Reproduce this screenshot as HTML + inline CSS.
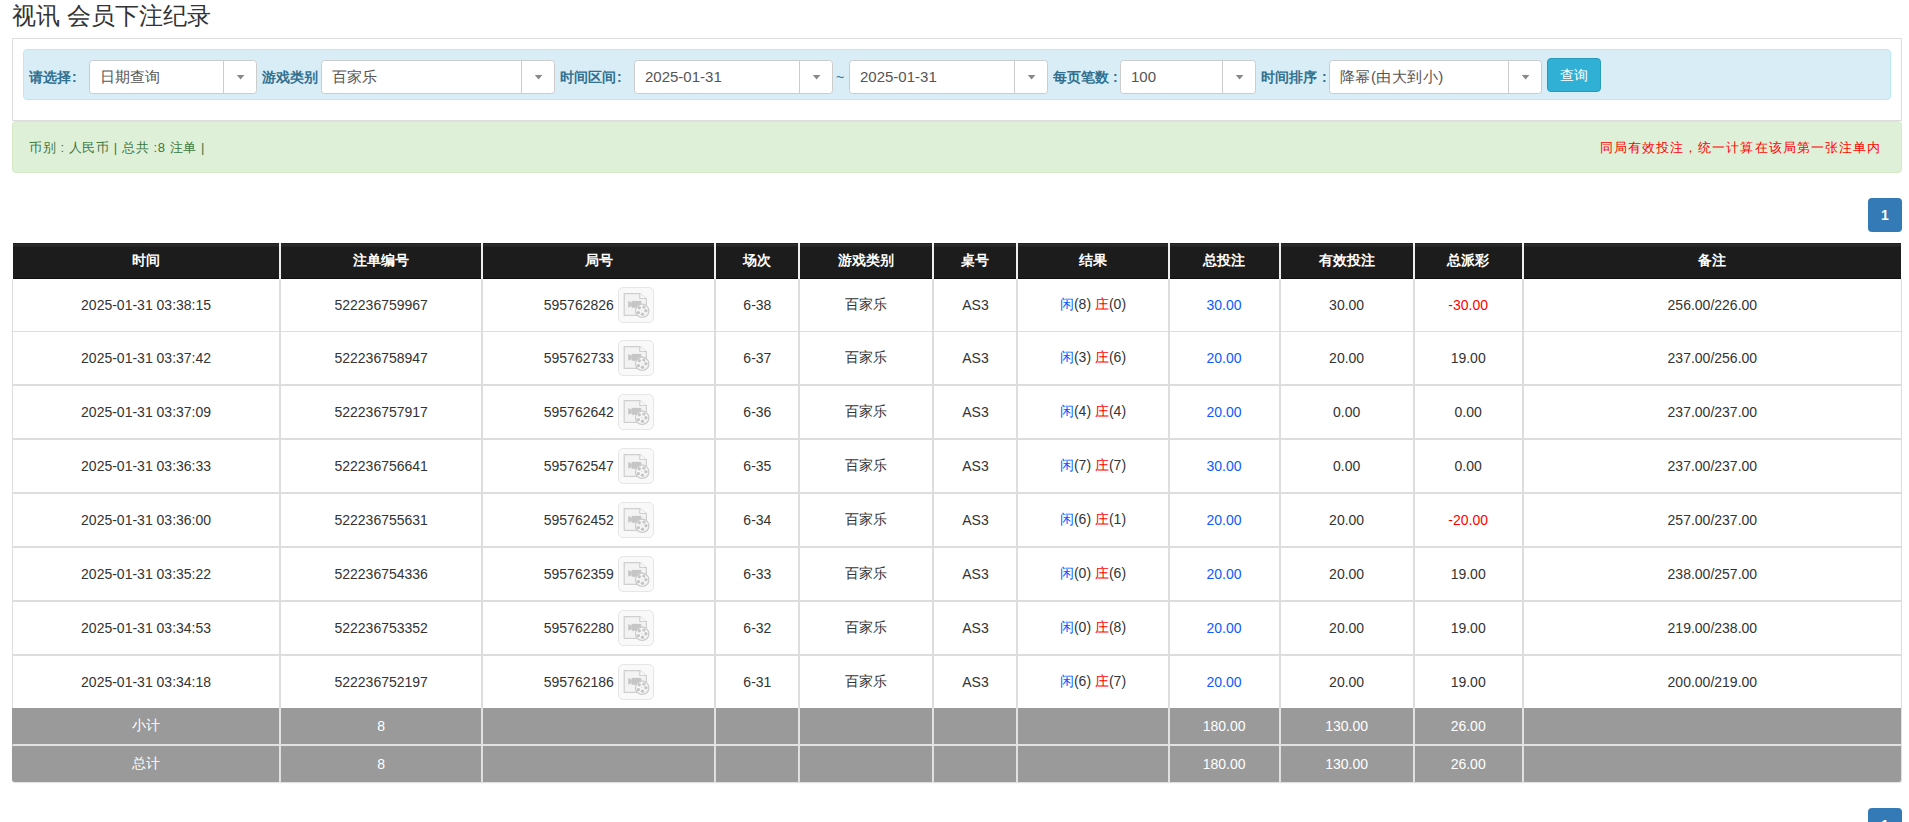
<!DOCTYPE html>
<html><head><meta charset="utf-8"><title>视讯 会员下注纪录</title>
<style>
*{box-sizing:border-box;margin:0;padding:0}
html,body{width:1909px;height:822px;overflow:hidden;background:#fff}
body{font-family:"Liberation Sans",sans-serif;font-size:14px;color:#333;position:relative}
.abs{position:absolute;white-space:nowrap}
h3{position:absolute;left:12px;top:3px;font-size:24px;font-weight:normal;line-height:26px;color:#333;white-space:nowrap}
.panel{position:absolute;left:12px;top:38px;width:1890px;height:83px;border:1px solid #ddd;background:#fff}
.info{position:absolute;left:23px;top:49px;width:1868px;height:51px;border:1px solid #bce8f1;background:#d9edf7;border-radius:4px}
.lbl{position:absolute;top:68px;font-size:14px;font-weight:bold;color:#31708f;line-height:18px;white-space:nowrap}
.sel{position:absolute;height:34px;border:1px solid #ccc;border-radius:3.5px;background:#fff}
.st{position:absolute;left:10px;top:7px;font-size:15px;line-height:18px;color:#555;white-space:nowrap}
.sa{position:absolute;right:0;top:0;width:33px;height:32px;border-left:1px solid #ccc}
.sa i{position:absolute;left:12.6px;top:14px;width:0;height:0;border-left:4px solid transparent;border-right:4px solid transparent;border-top:4.5px solid #888}
.btn{position:absolute;left:1547px;top:58px;width:54px;height:34px;background:#31b0d5;border:1px solid #269abc;border-radius:4px;color:#fff;font-size:14px;line-height:32px;text-align:center}
.ok{position:absolute;left:12px;top:121px;width:1890px;height:52px;border:1px solid #d6e9c6;background:#dff0d8;border-radius:4px}
.okl{position:absolute;left:16px;top:17px;font-size:13px;letter-spacing:0.6px;line-height:18px;color:#3c763d;white-space:nowrap}
.okr{position:absolute;right:20px;top:17px;font-size:13px;letter-spacing:1.05px;line-height:18px;color:#f00;white-space:nowrap}
.pg{position:absolute;left:1868px;width:34px;height:34px;background:#337ab7;border-radius:4px;color:#fff;font-weight:bold;font-size:14px;line-height:34px;text-align:center}
table{position:absolute;left:12px;top:243px;border-collapse:separate;border-spacing:0;table-layout:fixed;width:1890px}
th,td{text-align:center;vertical-align:middle;padding:0;white-space:nowrap;overflow:hidden}
th{background:linear-gradient(#212121 0,#212121 1px,#2a2a2a 1px,#2a2a2a 3px,#222 3px,#222 4px,#1c1c1c 4px);color:#fff;font-weight:bold;height:36px;border-right:2px solid #eee;box-shadow:inset 0 -1px 0 #0e0e0e}
th:first-child{border-left:1px solid #fff}
th:last-child{border-right:1px solid #fff}
td{height:54px;border-right:2px solid #ddd;border-bottom:2px solid #ddd}
td:first-child{border-left:1px solid #ddd}
td:last-child{border-right:1px solid #ddd}
tr.r1 td{height:53px;border-bottom:1px solid #ddd}
tr.r8 td{height:52px;border-bottom:0}
tr.sum td{background:#9a9a9a;color:#fff;height:38px;border-bottom:2px solid #e2e2e2;border-right-color:#e2e2e2}
tr.sum td:first-child{border-left:1px solid #9a9a9a}
tr.sum2 td{height:36px;border-bottom:0;box-shadow:0 1px 1px rgba(0,0,0,.12)}
tr.sum2 td:first-child{border-bottom-left-radius:3px}
tr.sum2 td:last-child{border-bottom-right-radius:3px}
.b{color:#0a5cff}.r{color:#f00}
.ic{display:inline-block;vertical-align:middle;width:36px;height:36px;border:1px solid #e6e6e6;border-radius:5px;background:#f9f9f9;margin-left:4px;position:relative;top:-1px}
.jh{position:relative;top:1px}
.ic svg{display:block}
</style></head><body>
<h3>视讯 会员下注纪录</h3>
<div class="panel"></div>
<div class="info"></div>

<div class="lbl" style="left:29px">请选择<span style="margin-left:1px">:</span></div>
<div class="sel" style="left:89px;top:60px;width:168px"><span class="st">日期查询</span><span class="sa"><svg width="32" height="32" style="position:absolute;left:0;top:0"><path d="M12.8 14.1h7.6l-3.8 4.4z" fill="#888"/></svg></span></div>
<div class="lbl" style="left:262px">游戏类别</div>
<div class="sel" style="left:321px;top:60px;width:234px"><span class="st">百家乐</span><span class="sa"><svg width="32" height="32" style="position:absolute;left:0;top:0"><path d="M12.8 14.1h7.6l-3.8 4.4z" fill="#888"/></svg></span></div>
<div class="lbl" style="left:560px">时间区间<span style="margin-left:1px">:</span></div>
<div class="sel" style="left:634px;top:60px;width:199px"><span class="st">2025-01-31</span><span class="sa"><svg width="32" height="32" style="position:absolute;left:0;top:0"><path d="M12.8 14.1h7.6l-3.8 4.4z" fill="#888"/></svg></span></div>
<div class="lbl" style="left:836px;font-weight:normal">~</div>
<div class="sel" style="left:849px;top:60px;width:199px"><span class="st">2025-01-31</span><span class="sa"><svg width="32" height="32" style="position:absolute;left:0;top:0"><path d="M12.8 14.1h7.6l-3.8 4.4z" fill="#888"/></svg></span></div>
<div class="lbl" style="left:1053px">每页笔数 :</div>
<div class="sel" style="left:1120px;top:60px;width:136px"><span class="st">100</span><span class="sa"><svg width="32" height="32" style="position:absolute;left:0;top:0"><path d="M12.8 14.1h7.6l-3.8 4.4z" fill="#888"/></svg></span></div>
<div class="lbl" style="left:1261px">时间排序 <span style="margin-left:1px">:</span></div>
<div class="sel" style="left:1329px;top:60px;width:213px"><span class="st"><span style="letter-spacing:0.45px">降幂(由大到小)</span></span><span class="sa"><svg width="32" height="32" style="position:absolute;left:0;top:0"><path d="M12.8 14.1h7.6l-3.8 4.4z" fill="#888"/></svg></span></div>
<div class="btn">查询</div>
<div class="ok"><div class="okl">币别 : 人民币 | 总共 :8 注单 |</div><div class="okr">同局有效投注，统一计算在该局第一张注单内</div></div>
<div class="pg" style="top:198px">1</div>
<table><colgroup><col style="width:269px"><col style="width:202px"><col style="width:233px"><col style="width:84px"><col style="width:134px"><col style="width:84px"><col style="width:151px"><col style="width:111px"><col style="width:134px"><col style="width:109px"><col style="width:378px"></colgroup>
<tr><th>时间</th><th>注单编号</th><th>局号</th><th>场次</th><th>游戏类别</th><th>桌号</th><th>结果</th><th>总投注</th><th>有效投注</th><th>总派彩</th><th>备注</th></tr>
<tr class="r1"><td>2025-01-31 03:38:15</td><td>522236759967</td><td><span class="jh">595762826<span class="ic"><svg width="34" height="34" viewBox="0 0 34 34"><path d="M5.2 5.6h15.6l6.6 5.2v16.6h-22.2z" fill="#f3f3f3" stroke="#cfcfcf" stroke-width="1.2"/><path d="M20.8 5.6v4.9h6.6" fill="#fbfbfb" stroke="#cfcfcf" stroke-width="1.2"/><g transform="translate(0.9,0.3)"><rect x="11.7" y="12.6" width="9.7" height="6.9" fill="#c6c6c6"/><path d="M8.3 12.8l3.6 1.6v3.4l-3.6 1.7z" fill="#c6c6c6"/></g><g transform="translate(0.7,0.4)"><circle cx="22.5" cy="22.4" r="6.7" fill="#f7f7f7" stroke="#cacaca" stroke-width="1.2"/><circle cx="19.6" cy="19.4" r="1.7" fill="#c6c6c6"/><circle cx="24.2" cy="18.7" r="1.7" fill="#c6c6c6"/><circle cx="26.2" cy="22.4" r="1.7" fill="#c6c6c6"/><circle cx="22.8" cy="25.9" r="1.7" fill="#c6c6c6"/><circle cx="18.7" cy="24.2" r="1.7" fill="#c6c6c6"/><circle cx="22.1" cy="22.1" r="0.6" fill="#d0d0d0"/></g></svg></span></span></td><td>6-38</td><td>百家乐</td><td>AS3</td><td><span class="b">闲</span>(8) <span class="r">庄</span>(0)</td><td class="b">30.00</td><td>30.00</td><td><span class="r">-30.00</span></td><td>256.00/226.00</td></tr>
<tr><td>2025-01-31 03:37:42</td><td>522236758947</td><td><span class="jh">595762733<span class="ic"><svg width="34" height="34" viewBox="0 0 34 34"><path d="M5.2 5.6h15.6l6.6 5.2v16.6h-22.2z" fill="#f3f3f3" stroke="#cfcfcf" stroke-width="1.2"/><path d="M20.8 5.6v4.9h6.6" fill="#fbfbfb" stroke="#cfcfcf" stroke-width="1.2"/><g transform="translate(0.9,0.3)"><rect x="11.7" y="12.6" width="9.7" height="6.9" fill="#c6c6c6"/><path d="M8.3 12.8l3.6 1.6v3.4l-3.6 1.7z" fill="#c6c6c6"/></g><g transform="translate(0.7,0.4)"><circle cx="22.5" cy="22.4" r="6.7" fill="#f7f7f7" stroke="#cacaca" stroke-width="1.2"/><circle cx="19.6" cy="19.4" r="1.7" fill="#c6c6c6"/><circle cx="24.2" cy="18.7" r="1.7" fill="#c6c6c6"/><circle cx="26.2" cy="22.4" r="1.7" fill="#c6c6c6"/><circle cx="22.8" cy="25.9" r="1.7" fill="#c6c6c6"/><circle cx="18.7" cy="24.2" r="1.7" fill="#c6c6c6"/><circle cx="22.1" cy="22.1" r="0.6" fill="#d0d0d0"/></g></svg></span></span></td><td>6-37</td><td>百家乐</td><td>AS3</td><td><span class="b">闲</span>(3) <span class="r">庄</span>(6)</td><td class="b">20.00</td><td>20.00</td><td>19.00</td><td>237.00/256.00</td></tr>
<tr><td>2025-01-31 03:37:09</td><td>522236757917</td><td><span class="jh">595762642<span class="ic"><svg width="34" height="34" viewBox="0 0 34 34"><path d="M5.2 5.6h15.6l6.6 5.2v16.6h-22.2z" fill="#f3f3f3" stroke="#cfcfcf" stroke-width="1.2"/><path d="M20.8 5.6v4.9h6.6" fill="#fbfbfb" stroke="#cfcfcf" stroke-width="1.2"/><g transform="translate(0.9,0.3)"><rect x="11.7" y="12.6" width="9.7" height="6.9" fill="#c6c6c6"/><path d="M8.3 12.8l3.6 1.6v3.4l-3.6 1.7z" fill="#c6c6c6"/></g><g transform="translate(0.7,0.4)"><circle cx="22.5" cy="22.4" r="6.7" fill="#f7f7f7" stroke="#cacaca" stroke-width="1.2"/><circle cx="19.6" cy="19.4" r="1.7" fill="#c6c6c6"/><circle cx="24.2" cy="18.7" r="1.7" fill="#c6c6c6"/><circle cx="26.2" cy="22.4" r="1.7" fill="#c6c6c6"/><circle cx="22.8" cy="25.9" r="1.7" fill="#c6c6c6"/><circle cx="18.7" cy="24.2" r="1.7" fill="#c6c6c6"/><circle cx="22.1" cy="22.1" r="0.6" fill="#d0d0d0"/></g></svg></span></span></td><td>6-36</td><td>百家乐</td><td>AS3</td><td><span class="b">闲</span>(4) <span class="r">庄</span>(4)</td><td class="b">20.00</td><td>0.00</td><td>0.00</td><td>237.00/237.00</td></tr>
<tr><td>2025-01-31 03:36:33</td><td>522236756641</td><td><span class="jh">595762547<span class="ic"><svg width="34" height="34" viewBox="0 0 34 34"><path d="M5.2 5.6h15.6l6.6 5.2v16.6h-22.2z" fill="#f3f3f3" stroke="#cfcfcf" stroke-width="1.2"/><path d="M20.8 5.6v4.9h6.6" fill="#fbfbfb" stroke="#cfcfcf" stroke-width="1.2"/><g transform="translate(0.9,0.3)"><rect x="11.7" y="12.6" width="9.7" height="6.9" fill="#c6c6c6"/><path d="M8.3 12.8l3.6 1.6v3.4l-3.6 1.7z" fill="#c6c6c6"/></g><g transform="translate(0.7,0.4)"><circle cx="22.5" cy="22.4" r="6.7" fill="#f7f7f7" stroke="#cacaca" stroke-width="1.2"/><circle cx="19.6" cy="19.4" r="1.7" fill="#c6c6c6"/><circle cx="24.2" cy="18.7" r="1.7" fill="#c6c6c6"/><circle cx="26.2" cy="22.4" r="1.7" fill="#c6c6c6"/><circle cx="22.8" cy="25.9" r="1.7" fill="#c6c6c6"/><circle cx="18.7" cy="24.2" r="1.7" fill="#c6c6c6"/><circle cx="22.1" cy="22.1" r="0.6" fill="#d0d0d0"/></g></svg></span></span></td><td>6-35</td><td>百家乐</td><td>AS3</td><td><span class="b">闲</span>(7) <span class="r">庄</span>(7)</td><td class="b">30.00</td><td>0.00</td><td>0.00</td><td>237.00/237.00</td></tr>
<tr><td>2025-01-31 03:36:00</td><td>522236755631</td><td><span class="jh">595762452<span class="ic"><svg width="34" height="34" viewBox="0 0 34 34"><path d="M5.2 5.6h15.6l6.6 5.2v16.6h-22.2z" fill="#f3f3f3" stroke="#cfcfcf" stroke-width="1.2"/><path d="M20.8 5.6v4.9h6.6" fill="#fbfbfb" stroke="#cfcfcf" stroke-width="1.2"/><g transform="translate(0.9,0.3)"><rect x="11.7" y="12.6" width="9.7" height="6.9" fill="#c6c6c6"/><path d="M8.3 12.8l3.6 1.6v3.4l-3.6 1.7z" fill="#c6c6c6"/></g><g transform="translate(0.7,0.4)"><circle cx="22.5" cy="22.4" r="6.7" fill="#f7f7f7" stroke="#cacaca" stroke-width="1.2"/><circle cx="19.6" cy="19.4" r="1.7" fill="#c6c6c6"/><circle cx="24.2" cy="18.7" r="1.7" fill="#c6c6c6"/><circle cx="26.2" cy="22.4" r="1.7" fill="#c6c6c6"/><circle cx="22.8" cy="25.9" r="1.7" fill="#c6c6c6"/><circle cx="18.7" cy="24.2" r="1.7" fill="#c6c6c6"/><circle cx="22.1" cy="22.1" r="0.6" fill="#d0d0d0"/></g></svg></span></span></td><td>6-34</td><td>百家乐</td><td>AS3</td><td><span class="b">闲</span>(6) <span class="r">庄</span>(1)</td><td class="b">20.00</td><td>20.00</td><td><span class="r">-20.00</span></td><td>257.00/237.00</td></tr>
<tr><td>2025-01-31 03:35:22</td><td>522236754336</td><td><span class="jh">595762359<span class="ic"><svg width="34" height="34" viewBox="0 0 34 34"><path d="M5.2 5.6h15.6l6.6 5.2v16.6h-22.2z" fill="#f3f3f3" stroke="#cfcfcf" stroke-width="1.2"/><path d="M20.8 5.6v4.9h6.6" fill="#fbfbfb" stroke="#cfcfcf" stroke-width="1.2"/><g transform="translate(0.9,0.3)"><rect x="11.7" y="12.6" width="9.7" height="6.9" fill="#c6c6c6"/><path d="M8.3 12.8l3.6 1.6v3.4l-3.6 1.7z" fill="#c6c6c6"/></g><g transform="translate(0.7,0.4)"><circle cx="22.5" cy="22.4" r="6.7" fill="#f7f7f7" stroke="#cacaca" stroke-width="1.2"/><circle cx="19.6" cy="19.4" r="1.7" fill="#c6c6c6"/><circle cx="24.2" cy="18.7" r="1.7" fill="#c6c6c6"/><circle cx="26.2" cy="22.4" r="1.7" fill="#c6c6c6"/><circle cx="22.8" cy="25.9" r="1.7" fill="#c6c6c6"/><circle cx="18.7" cy="24.2" r="1.7" fill="#c6c6c6"/><circle cx="22.1" cy="22.1" r="0.6" fill="#d0d0d0"/></g></svg></span></span></td><td>6-33</td><td>百家乐</td><td>AS3</td><td><span class="b">闲</span>(0) <span class="r">庄</span>(6)</td><td class="b">20.00</td><td>20.00</td><td>19.00</td><td>238.00/257.00</td></tr>
<tr><td>2025-01-31 03:34:53</td><td>522236753352</td><td><span class="jh">595762280<span class="ic"><svg width="34" height="34" viewBox="0 0 34 34"><path d="M5.2 5.6h15.6l6.6 5.2v16.6h-22.2z" fill="#f3f3f3" stroke="#cfcfcf" stroke-width="1.2"/><path d="M20.8 5.6v4.9h6.6" fill="#fbfbfb" stroke="#cfcfcf" stroke-width="1.2"/><g transform="translate(0.9,0.3)"><rect x="11.7" y="12.6" width="9.7" height="6.9" fill="#c6c6c6"/><path d="M8.3 12.8l3.6 1.6v3.4l-3.6 1.7z" fill="#c6c6c6"/></g><g transform="translate(0.7,0.4)"><circle cx="22.5" cy="22.4" r="6.7" fill="#f7f7f7" stroke="#cacaca" stroke-width="1.2"/><circle cx="19.6" cy="19.4" r="1.7" fill="#c6c6c6"/><circle cx="24.2" cy="18.7" r="1.7" fill="#c6c6c6"/><circle cx="26.2" cy="22.4" r="1.7" fill="#c6c6c6"/><circle cx="22.8" cy="25.9" r="1.7" fill="#c6c6c6"/><circle cx="18.7" cy="24.2" r="1.7" fill="#c6c6c6"/><circle cx="22.1" cy="22.1" r="0.6" fill="#d0d0d0"/></g></svg></span></span></td><td>6-32</td><td>百家乐</td><td>AS3</td><td><span class="b">闲</span>(0) <span class="r">庄</span>(8)</td><td class="b">20.00</td><td>20.00</td><td>19.00</td><td>219.00/238.00</td></tr>
<tr class="r8"><td>2025-01-31 03:34:18</td><td>522236752197</td><td><span class="jh">595762186<span class="ic"><svg width="34" height="34" viewBox="0 0 34 34"><path d="M5.2 5.6h15.6l6.6 5.2v16.6h-22.2z" fill="#f3f3f3" stroke="#cfcfcf" stroke-width="1.2"/><path d="M20.8 5.6v4.9h6.6" fill="#fbfbfb" stroke="#cfcfcf" stroke-width="1.2"/><g transform="translate(0.9,0.3)"><rect x="11.7" y="12.6" width="9.7" height="6.9" fill="#c6c6c6"/><path d="M8.3 12.8l3.6 1.6v3.4l-3.6 1.7z" fill="#c6c6c6"/></g><g transform="translate(0.7,0.4)"><circle cx="22.5" cy="22.4" r="6.7" fill="#f7f7f7" stroke="#cacaca" stroke-width="1.2"/><circle cx="19.6" cy="19.4" r="1.7" fill="#c6c6c6"/><circle cx="24.2" cy="18.7" r="1.7" fill="#c6c6c6"/><circle cx="26.2" cy="22.4" r="1.7" fill="#c6c6c6"/><circle cx="22.8" cy="25.9" r="1.7" fill="#c6c6c6"/><circle cx="18.7" cy="24.2" r="1.7" fill="#c6c6c6"/><circle cx="22.1" cy="22.1" r="0.6" fill="#d0d0d0"/></g></svg></span></span></td><td>6-31</td><td>百家乐</td><td>AS3</td><td><span class="b">闲</span>(6) <span class="r">庄</span>(7)</td><td class="b">20.00</td><td>20.00</td><td>19.00</td><td>200.00/219.00</td></tr>
<tr class="sum"><td>小计</td><td>8</td><td></td><td></td><td></td><td></td><td></td><td>180.00</td><td>130.00</td><td>26.00</td><td></td></tr>
<tr class="sum sum2"><td>总计</td><td>8</td><td></td><td></td><td></td><td></td><td></td><td>180.00</td><td>130.00</td><td>26.00</td><td></td></tr>
</table>
<div class="pg" style="top:808px">1</div>
</body></html>
